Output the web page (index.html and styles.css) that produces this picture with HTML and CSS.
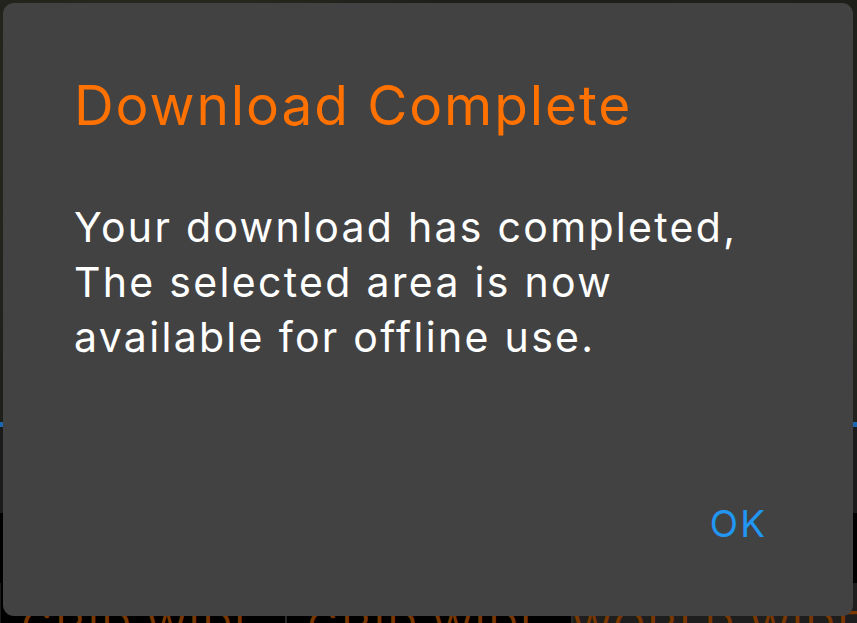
FILE: index.html
```html
<!DOCTYPE html>
<html lang="en">
<head>
<meta charset="utf-8">
<title>Download Complete</title>
<link rel="stylesheet" href="styles.css">
</head>
<body>
<div class="screen">
  <div class="map"></div>
  <div class="progress"></div>
  <div class="toolbar"></div>
  <div class="gap"></div>
  <div class="tabs">
    <div class="tab">GRID WIDE</div>
    <div class="tab">GRID WIDE</div>
    <div class="tab active">WORLD WIDE</div>
  </div>
</div>
<div class="dialog" role="alertdialog" aria-labelledby="dlg-title">
  <h1 class="dialog-title" id="dlg-title">Download Complete</h1>
  <p class="dialog-body">Your download has completed,<br>The selected area is now<br>available for offline use.</p>
  <div class="dialog-actions">
    <button class="dialog-btn" type="button">OK</button>
  </div>
</div>
</body>
</html>
```

FILE: styles.css
```css
html, body {
  margin: 0;
  padding: 0;
}
body {
  width: 857px;
  height: 623px;
  overflow: hidden;
  background: #000;
  font-family: Inter, "Liberation Sans", sans-serif;
  position: relative;
}
.screen {
  display: flex;
  flex-direction: column;
  height: 623px;
}
.map {
  height: 422px;
  flex: none;
  background:
    radial-gradient(circle at 20% 30%, rgba(70, 75, 55, 0.35) 0, transparent 40%),
    radial-gradient(circle at 85% 60%, rgba(60, 64, 48, 0.35) 0, transparent 35%),
    radial-gradient(circle at 50% 90%, rgba(55, 58, 42, 0.3) 0, transparent 30%),
    #1e1f19;
}
.progress {
  height: 5px;
  flex: none;
  background: #1b66b0;
}
.toolbar {
  height: 86px;
  flex: none;
  background: #1b1b1b;
}
.gap {
  height: 70px;
  flex: none;
  background: #000;
}
.tabs {
  flex: 1;
  display: flex;
  background: #000;
}
.tab {
  flex: 1;
  border-left: 2px solid #2a2a2a;
  color: #7a3800;
  font-family: "Liberation Sans", sans-serif;
  font-size: 40px;
  line-height: 1;
  padding-top: 22px;
  text-align: center;
  white-space: nowrap;
  overflow: hidden;
  letter-spacing: 3px;
}
.tab:first-child {
  border-left: 1px solid #1a1a1a;
}
.tab.active {
  background: #1e1e1e;
}
.dialog {
  position: absolute;
  left: 3px;
  top: 3px;
  width: 850px;
  height: 613px;
  box-sizing: border-box;
  background: #424242;
  border-radius: 11px;
  padding: 69px 86px 70px 71px;
  display: flex;
  flex-direction: column;
}
.dialog-title {
  margin: 0;
  font-size: 55px;
  line-height: 66px;
  font-weight: 400;
  letter-spacing: 1.9px;
  color: #ff7100;
}
.dialog-body {
  margin: 62px 0 0;
  font-size: 41px;
  line-height: 55px;
  letter-spacing: 2.3px;
  color: #ffffff;
}
.dialog-actions {
  margin-top: auto;
  display: flex;
  justify-content: flex-end;
}
.dialog-btn {
  background: none;
  border: 0;
  padding: 0;
  font-family: inherit;
  font-size: 37px;
  line-height: 44px;
  letter-spacing: 2px;
  color: #2196f3;
}
```
